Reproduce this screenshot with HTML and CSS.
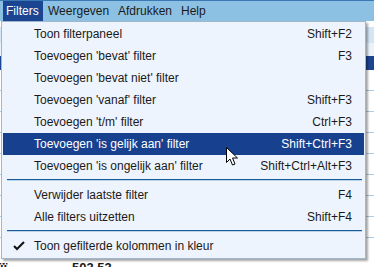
FILE: index.html
```
<!DOCTYPE html>
<html lang="nl">
	<head>
		<meta charset="utf-8" />
		<title>Filters menu</title>
		<link rel="stylesheet" href="styles.css">
	</head>
	<body>
		<div class="screen">
			<div class="menubar">
				<span class="menu open">Filters</span>
				<span class="menu m2">Weergeven</span>
				<span class="menu m3">Afdrukken</span>
				<span class="menu">Help</span>
			</div>
			<div class="grid">
				<div class="row gap"></div>
				<div class="row head"></div>
				<div class="row light"></div>
				<div class="row sel"></div>
				<div class="row"></div>
				<div class="row"></div>
				<div class="row"></div>
				<div class="row"></div>
				<div class="row"></div>
				<div class="row"></div>
				<div class="row"></div>
				<div class="row"></div>
				<div class="row last"><span class="c1">ïï</span><span class="c2">503,53</span></div>
			</div>

			<div class="dropdown">
				<div class="item"><span>Toon filterpaneel</span><span>Shift+F2</span></div>
				<div class="item"><span>Toevoegen 'bevat' filter</span><span>F3</span></div>
				<div class="item"><span>Toevoegen 'bevat niet' filter</span><span></span></div>
				<div class="item"><span>Toevoegen 'vanaf' filter</span><span>Shift+F3</span></div>
				<div class="item"><span>Toevoegen 't/m' filter</span><span>Ctrl+F3</span></div>
				<div class="item active"><span>Toevoegen 'is gelijk aan' filter</span><span>Shift+Ctrl+F3</span></div>
				<div class="item"><span>Toevoegen 'is ongelijk aan' filter</span><span>Shift+Ctrl+Alt+F3</span></div>
				<div class="sep"></div>
				<div class="item"><span>Verwijder laatste filter</span><span>F4</span></div>
				<div class="item"><span>Alle filters uitzetten</span><span>Shift+F4</span></div>
				<div class="sep"></div>
				<div class="item checked">
					<svg class="check" width="12" height="10" viewBox="0 0 12 10"><path d="M1 5 L4 8 L11 1" fill="none" stroke="#111" stroke-width="2"/></svg>
					<span>Toon gefilterde kolommen in kleur</span><span></span>
				</div>
			</div>

			<svg class="cursor" width="14" height="20" viewBox="0 0 14 20">
				<path d="M0.5 0.5 L0.5 15.5 L4 12 L6.5 18 L9 17 L6.5 11 L11.5 11 Z" fill="#fff" stroke="#000" stroke-width="1"/>
			</svg>
		</div>
	</body>
</html>
```
FILE: styles.css
```
* {
	padding: 0;
	margin: 0;
	box-sizing: border-box;
}

body {
	background: #fff;
	font-family: "Liberation Sans", Arial, sans-serif;
	font-size: 12px;
	color: #1a1a1a;
}

.screen {
	position: relative;
	width: 374px;
	height: 267px;
	overflow: hidden;
}

.menubar {
	display: flex;
	height: 21px;
	padding: 0 0 0 3px;
	background: #8dc1e3;
	border-top: 1px solid #3a78b4;
}

.menu {
	display: flex;
	align-items: center;
	padding: 0 0 0 3px;
}

.menu.open {
	width: 40px;
	margin-right: 2px;
	background: #1b4591;
	color: #fff;
}

.menu.m2 {
	width: 70px;
}

.menu.m3 {
	width: 63px;
}

.grid {
	display: flex;
	flex-direction: column;
}

.row {
	height: 21px;
	border-bottom: 1px solid #a9cde9;
	flex: none;
	position: relative;
}

.row.gap {
	height: 6px;
	border: none;
}

.row.head {
	height: 16px;
	background: #d4e6f4;
	border: none;
}

.row.light {
	height: 13px;
	background: #eaf3fa;
	border: none;
}

.row.sel {
	height: 14px;
	background: #1b4591;
	border: none;
}

.row.last {
	border: none;
	font-weight: bold;
	font-size: 13px;
}

.c1 {
	position: absolute;
	left: 0;
	top: 22px;
}

.c2 {
	position: absolute;
	left: 72px;
	top: 22px;
}

.dropdown {
	position: absolute;
	left: 1px;
	top: 21px;
	width: 365px;
	padding: 1px;
	background: #eef4fd;
	border: 1px solid #9fb6cc;
	box-shadow: 2px 2px 2px rgba(0, 0, 0, 0.35);
}

.item {
	display: flex;
	align-items: center;
	justify-content: space-between;
	height: 22px;
	padding: 0 12px 0 31px;
	position: relative;
}

.item.active {
	background: #17418f;
	color: #fff;
}

.sep {
	height: 7px;
	margin: 0 2px 0 4px;
	border-top: 2px solid transparent;
	position: relative;
}

.sep::after {
	content: "";
	display: block;
	height: 1px;
	background: #1d5b98;
	border-bottom: 1px solid #b9d3ea;
	box-sizing: content-box;
}

.check {
	position: absolute;
	left: 10px;
	top: 6px;
}

.cursor {
	position: absolute;
	left: 226px;
	top: 147px;
}
```
